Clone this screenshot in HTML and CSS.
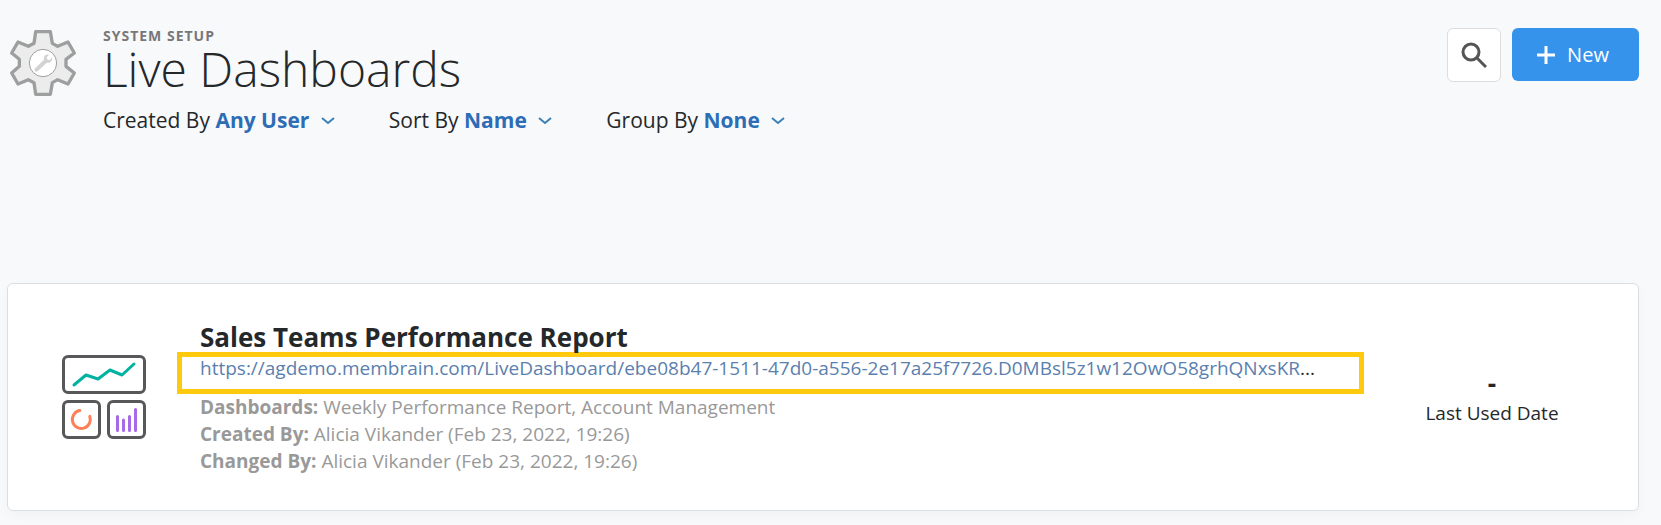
FILE: index.html
```html
<!DOCTYPE html>
<html lang="en">
<head>
    <meta charset="UTF-8">
    <title>Live Dashboards - System Setup</title>
    <link rel="stylesheet" href="styles.css">
</head>
<body>
    <header class="page-header">
        <svg class="gear" viewBox="21 21 216 216" aria-hidden="true">
            <path d="M107 35H151L157 70L173 79L204 66L223 99L198 118V139L223 159L204 192L173 179L157 188L151 223H107L102 188L85 179L54 192L35 159L58 139V118L35 99L54 66L85 79L102 70Z" fill="#ececec" stroke="#9d9f9f" stroke-width="10" stroke-linejoin="round"/>
            <circle cx="129" cy="129" r="41" fill="#fff" stroke="#9d9f9f" stroke-width="3"/>
            <path d="M104 146L132 119C130 109 136 102 147 104L140 112L143 119L150 120L156 111C158 122 152 131 140 128L113 154C107 156 102 152 104 146Z" fill="#d2d2d2"/>
        </svg>
        <div class="heading">
            <div class="section">SYSTEM SETUP</div>
            <h1>Live Dashboards</h1>
            <div class="filters">
                <button type="button" class="filter">Created By <b>Any User</b>
                    <svg viewBox="0 0 14 8"><path d="M1 1L7 6L13 1"/></svg>
                </button>
                <button type="button" class="filter">Sort By <b>Name</b>
                    <svg viewBox="0 0 14 8"><path d="M1 1L7 6L13 1"/></svg>
                </button>
                <button type="button" class="filter">Group By <b>None</b>
                    <svg viewBox="0 0 14 8"><path d="M1 1L7 6L13 1"/></svg>
                </button>
            </div>
        </div>
        <div class="actions">
            <button type="button" class="search" aria-label="Search">
                <svg viewBox="0 0 26 26"><circle cx="10" cy="10" r="8"/><path d="M16 16L25 25"/></svg>
            </button>
            <button type="button" class="new">
                <svg viewBox="0 0 18 18"><path d="M9 0V18M0 9H18"/></svg>
                New
            </button>
        </div>
    </header>

    <main class="card">
        <svg class="dashboard-icon" viewBox="0 0 84 84" aria-hidden="true">
            <g fill="none" stroke="#58585b" stroke-width="3">
                <rect x="1.5" y="1.5" width="81" height="36" rx="4.5"/>
                <rect x="1.5" y="46.5" width="36" height="36" rx="4.5"/>
                <rect x="46.5" y="46.5" width="36" height="36" rx="4.5"/>
            </g>
            <path d="M12 30L24 20L36 24L48 15L60 20L72 9" fill="none" stroke="#00b2a2" stroke-width="3" stroke-linecap="round" stroke-linejoin="round"/>
            <path d="M17.8 55.6A9 9 0 1 0 27.8 61.4" fill="none" stroke="#ff7f57" stroke-width="3" stroke-linecap="round"/>
            <path d="M55.5 61.5V75.5M61.5 65V75.5M67.5 61.5V75.5M73.5 54.5V75.5" stroke="#a769e8" stroke-width="3" stroke-linecap="round"/>
        </svg>
        <div class="details">
            <h2>Sales Teams Performance Report</h2>
            <div class="link-box">
                <a href="#">https://agdemo.membrain.com/LiveDashboard/ebe08b47-1511-47d0-a556-2e17a25f7726.D0MBsl5z1w12OwO58grhQNxsKR</a>...
            </div>
            <div class="meta"><b>Dashboards:</b> Weekly Performance Report, Account Management</div>
            <div class="meta"><b>Created By:</b> Alicia Vikander (Feb 23, 2022, 19:26)</div>
            <div class="meta"><b>Changed By:</b> Alicia Vikander (Feb 23, 2022, 19:26)</div>
        </div>
        <div class="last-used">
            <b>-</b>
            <span>Last Used Date</span>
        </div>
    </main>
</body>
</html>
```
FILE: styles.css
```css
* {
    box-sizing: border-box;
}
body {
    margin: 0;
    padding: 27px 22px 12px 7px;
    background-color: #f8f9fb;
    color: #25282a;
    font-family: "Open Sans", sans-serif;
    font-size: 19px;
}
button {
    font: inherit;
    color: inherit;
    cursor: pointer;
}
h1, h2 {
    margin: 0;
}
.page-header {
    display: flex;
    align-items: flex-start;
    margin-bottom: 147px;
}
.gear {
    width: 72px;
    height: 72px;
    margin-right: 24px;
}
.heading {
    flex: 1;
}
.section {
    font-size: 14px;
    font-weight: 700;
    line-height: 18px;
    letter-spacing: 1px;
    color: #777;
}
h1 {
    font-size: 48px;
    font-weight: 300;
    line-height: 48px;
}
.filters {
    display: flex;
    gap: 54px;
    margin-top: 11px;
}
.filter {
    padding: 0;
    border: none;
    background: none;
    font-size: 21px;
    line-height: 32px;
}
.filter b {
    color: #2c6db5;
}
.filter svg {
    width: 14px;
    height: 8px;
    margin-left: 6px;
    vertical-align: 3px;
    fill: none;
    stroke: #3b80b6;
    stroke-width: 2;
}
.actions {
    display: flex;
    align-items: flex-start;
    gap: 11px;
    margin-top: 1px;
}
.search, .new {
    display: flex;
    align-items: center;
    justify-content: center;
    border-radius: 6px;
}
.search {
    width: 54px;
    height: 54px;
    padding: 0;
    background-color: #fff;
    border: 1px solid #ddd;
}
.search svg {
    width: 26px;
    height: 26px;
    fill: none;
    stroke: #555;
    stroke-width: 3;
}
.new {
    gap: 12px;
    width: 127px;
    height: 53px;
    padding: 0 5px 0 0;
    border: none;
    background-color: #3593eb;
    color: #fff;
    font-size: 20px;
}
.new svg {
    width: 18px;
    height: 18px;
    stroke: #fff;
    stroke-width: 3;
}
.card {
    display: flex;
    align-items: center;
    padding: 38px 78px 35px 54px;
    border: 1px solid #dcdfe1;
    border-radius: 6px;
    background-color: #fff;
    box-shadow: 0 4px 12px rgba(0, 0, 0, 0.03);
}
.dashboard-icon {
    flex: none;
    width: 84px;
    height: 84px;
    margin: 0 54px 4px 0;
}
.details {
    flex: 1;
    min-width: 0;
}
h2 {
    font-size: 26px;
    font-weight: 700;
    line-height: 30px;
}
.link-box {
    height: 42px;
    margin-left: -23px;
    padding: 0 18px;
    border: 5px solid #ffc90e;
    line-height: 22px;
    white-space: nowrap;
    overflow: hidden;
}
.link-box a {
    color: #5b7fae;
    text-decoration: none;
}
.meta {
    line-height: 27px;
    color: #999;
}
.last-used {
    display: flex;
    flex-direction: column;
    flex: none;
    align-items: center;
    width: 136px;
    margin: 0 0 2px 60px;
    line-height: 30px;
}
.last-used b {
    font-size: 26px;
}
```
